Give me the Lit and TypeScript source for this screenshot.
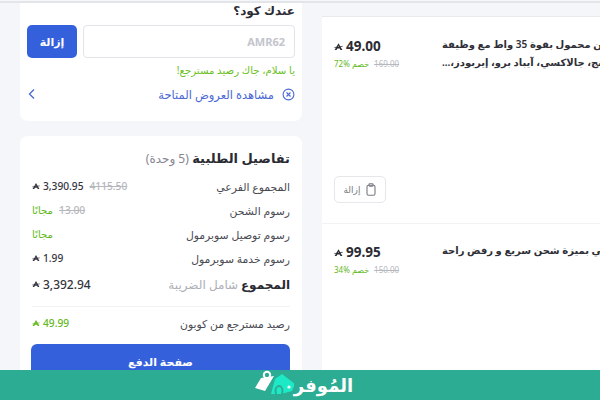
import { LitElement, html, css, svg } from "lit";
import { customElement } from "lit/decorators.js";

const riyal = () => html`<svg class="sar" viewBox="0 0 12 10" aria-hidden="true"><path d="M6 .5 11.2 9.5H8.6L7.6 7.6H4.4L3.4 9.5H.8ZM6 3.8 5.2 5.6H6.8Z" fill="currentColor" fill-rule="evenodd"/><path d="M.5 6.4 11.5 4.8" stroke="currentColor" stroke-width="1"/></svg>`;

@customElement("app-root")
export class AppRoot extends LitElement {
  static styles = css`
    :host { display: block; width: 600px; height: 400px; overflow: hidden; position: relative; background: #f5f6f9; font-family: "Noto Sans", "DejaVu Sans", sans-serif; color: #333; }
    .page { display: flex; flex-direction: column; height: 400px; }
    .topline { height: 2px; margin-top: 1px; background: #e4e5e8; flex: none; }
    .cols { display: flex; gap: 20px; padding-left: 20px; align-items: flex-start; }
    .left { width: 282px; flex: none; display: flex; flex-direction: column; gap: 15px; }
    .card { background: #fff; border-radius: 8px; }
    .code { height: 118px; border-radius: 0 0 8px 8px; padding: 0 7px; box-sizing: border-box; direction: rtl; }
    .code h3 { margin: 0; font-size: 12px; line-height: 16px; font-weight: 700; color: #2b2b33; }
    .form { display: flex; gap: 6px; margin-top: 6px; }
    .input { flex: 1; height: 33px; box-sizing: border-box; border: 1px solid #e3e4e8; border-radius: 4px; display: flex; align-items: center; padding: 0 9px; direction: ltr; justify-content: flex-end; color: #c3c5cc; font-size: 11px; font-weight: 700; }
    .btn { width: 50px; height: 33px; background: #3560dc; color: #fff; border-radius: 5px; font-size: 11px; font-weight: 700; display: flex; align-items: center; justify-content: center; }
    .msg { margin-top: 4px; font-size: 10.2px; line-height: 16px; color: #6cbf1f; }
    .offers { display: flex; align-items: center; margin-top: 7px; color: #4b68d6; font-size: 11.5px; height: 18px; gap: 8px; }
    .offers .grow { flex: 1; }
    .offers svg { flex: none; }
    .details { padding: 0 12px; height: 300px; direction: rtl; }
    .details h2 { margin: 12px 0 0; height: 20px; font-size: 13px; line-height: 20px; font-weight: 700; color: #2b2b33; }
    .details h2 span { font-weight: 400; font-size: 12px; color: #85868f; }
    .rows { margin-top: 6px; }
    .row { display: flex; justify-content: space-between; align-items: center; height: 24px; font-size: 10.8px; color: #4a4a52; }
    .val { display: flex; direction: ltr; align-items: center; gap: 6px; font-size: 10.2px; font-weight: 500; color: #34343c; }
    .del { color: #b6b8be; text-decoration: line-through; }
    .free { color: #62b81c; font-weight: 500; }
    .total { margin-top: 1px; height: 26px; }
    .total b { font-size: 12px; color: #2b2b33; }
    .total .tax { color: #aeb0b7; font-size: 12px; }
    .total .val { font-size: 12px; font-weight: 500; }
    .sep { border-top: 1px solid #f1f2f4; margin-top: 9px; }
    .coupon { margin-top: 4px; }
    .coupon .val { color: #62b81c; }
    .pay { margin-top: 9px; height: 44px; background: #3560dc; color: #fff; border-radius: 6px; display: flex; justify-content: center; padding-top: 10px; box-sizing: border-box; font-size: 11px; font-weight: 700; width: 259px; }
    .sar { width: 8px; height: 8px; flex: none; margin-right: -3px; }
    .right { width: 420px; flex: none; background: #fff; height: 400px; margin-top: 13px; border-top: 1px solid #e8e9ec; }
    .item { display: flex; gap: 34px; padding: 0 12px; height: 207px; border-bottom: 1px solid #f2f3f5; box-sizing: border-box; }
    .item + .item { border-bottom: 0; margin-top: -1px; }
    .pricecol { width: 74px; flex: none; display: flex; flex-direction: column; }
    .price { margin-top: 20px; display: flex; align-items: center; gap: 3px; font-size: 13.5px; font-weight: 700; color: #2b2b33; direction: ltr; }
    .price .sar { width: 9px; height: 9px; margin: 0; }
    .disc { display: flex; gap: 5px; font-size: 8px; margin-top: 3px; white-space: nowrap; direction: ltr; }
    .disc .green { color: #62b81c; direction: rtl; unicode-bidi: isolate; }
    .pct { direction: ltr; unicode-bidi: isolate; }
    .title { padding-top: 18px; font-size: 10px; line-height: 18px; font-weight: 600; color: #2f2f37; white-space: nowrap; direction: ltr; }
    .title div { direction: rtl; text-align: left; unicode-bidi: isolate; }
    .remove { margin-top: auto; margin-bottom: 20px; width: 52px; height: 27px; border: 1px solid #e6e7ea; border-radius: 5px; display: flex; align-items: center; justify-content: center; gap: 6px; direction: ltr; font-size: 9px; color: #777a84; box-sizing: border-box; }
    .bar { position: absolute; left: 0; right: 0; bottom: 0; height: 30px; background: #2bac93; display: flex; align-items: center; justify-content: center; gap: 0; padding-left: 7px; color: #fff; font-size: 18px; font-weight: 700; }
  `;

  private details() {
    return html`
      <div class="rows">
        <div class="row"><span>المجموع الفرعي</span><span class="val">${riyal()} 3,390.95 <span class="del">4115.50</span></span></div>
        <div class="row"><span>رسوم الشحن</span><span class="val"><span class="free">مجانًا</span> <span class="del">13.00</span></span></div>
        <div class="row"><span>رسوم توصيل سوبرمول</span><span class="val"><span class="free">مجانًا</span></span></div>
        <div class="row"><span>رسوم خدمة سوبرمول</span><span class="val">${riyal()} 1.99</span></div>
        <div class="row total"><span><b>المجموع</b> <span class="tax">شامل الضريبة</span></span><span class="val">${riyal()} 3,392.94</span></div>
        <div class="sep"></div>
        <div class="row coupon"><span>رصيد مسترجع من كوبون</span><span class="val">${riyal()} 49.99</span></div>
      </div>`;
  }

  render() {
    return html`
      <div class="page">
        <div class="topline"></div>
        <div class="cols">
          <div class="left">
            <section class="card code">
              <h3>عندك كود؟</h3>
              <div class="form">
                <div class="input">AMR62</div>
                <div class="btn">إزالة</div>
              </div>
              <div class="msg">يا سلام، جاك رصيد مسترجع!</div>
              <div class="offers">
                <svg width="13" height="13" viewBox="0 0 13 13" fill="none" stroke="#4b68d6" stroke-width="1.1"><circle cx="6.5" cy="6.5" r="5.4"/><path d="M4.5 4.5l4 4M8.5 4.5l-4 4"/></svg>
                <span>مشاهدة العروض المتاحة</span>
                <span class="grow"></span>
                <svg width="10" height="12" viewBox="0 0 10 12" fill="none" stroke="#4b68d6" stroke-width="1.3"><path d="M7 1.5 2.5 6 7 10.5"/></svg>
              </div>
            </section>
            <section class="card details">
              <h2>تفاصيل الطلبية <span>(5 وحدة)</span></h2>
              ${this.details()}
              <div class="pay">صفحة الدفع</div>
            </section>
          </div>
          <div class="right">
            <div class="item">
              <div class="pricecol">
                <div class="price">${riyal()} 49.00</div>
                <div class="disc"><span class="green">خصم <span class="pct">72%</span></span> <span class="del">169.00</span></div>
                <div class="remove"><span>إزالة</span>
                  <svg width="10" height="13" viewBox="0 0 10 13" fill="none" stroke="#777a84" stroke-width="1.1"><rect x="1" y="2.2" width="8" height="10" rx="1.5"/><rect x="3" y=".8" width="4" height="2.4" rx=".6"/></svg>
                </div>
              </div>
              <div class="title">
                <div>شاحن محمول بقوة 35 واط مع وظيفة</div>
                <div>الشحن السريع لأجهزة سامسونج، جالاكسي، آيباد برو، إيربودز،...</div>
              </div>
            </div>
            <div class="item">
              <div class="pricecol">
                <div class="price">${riyal()} 99.95</div>
                <div class="disc"><span class="green">خصم <span class="pct">34%</span></span> <span class="del">150.00</span></div>
              </div>
              <div class="title">
                <div>شاحن ذكي بميزة شحن سريع و رفض راحة</div>
              </div>
            </div>
          </div>
        </div>
      </div>
      <div class="bar">
        <svg width="40" height="30" viewBox="0 0 40 30">
          ${svg`<circle cx="13" cy="5" r="3.2" fill="none" stroke="#fff" stroke-width="2"/>
          <path d="M1 18 7 8 20 6 11 21Z" fill="#fff"/>
          <path d="M21 9 28 4 41 14 38 21 27 24 17 24Z" fill="#1de9c6"/>
          <ellipse cx="25" cy="21" rx="3.5" ry="5" fill="none" stroke="#2bac93" stroke-width="2"/>
          <circle cx="35" cy="17" r="1.6" fill="#fff"/>`}
        </svg>
        <span>المُوفر</span>
      </div>
    `;
  }
}
